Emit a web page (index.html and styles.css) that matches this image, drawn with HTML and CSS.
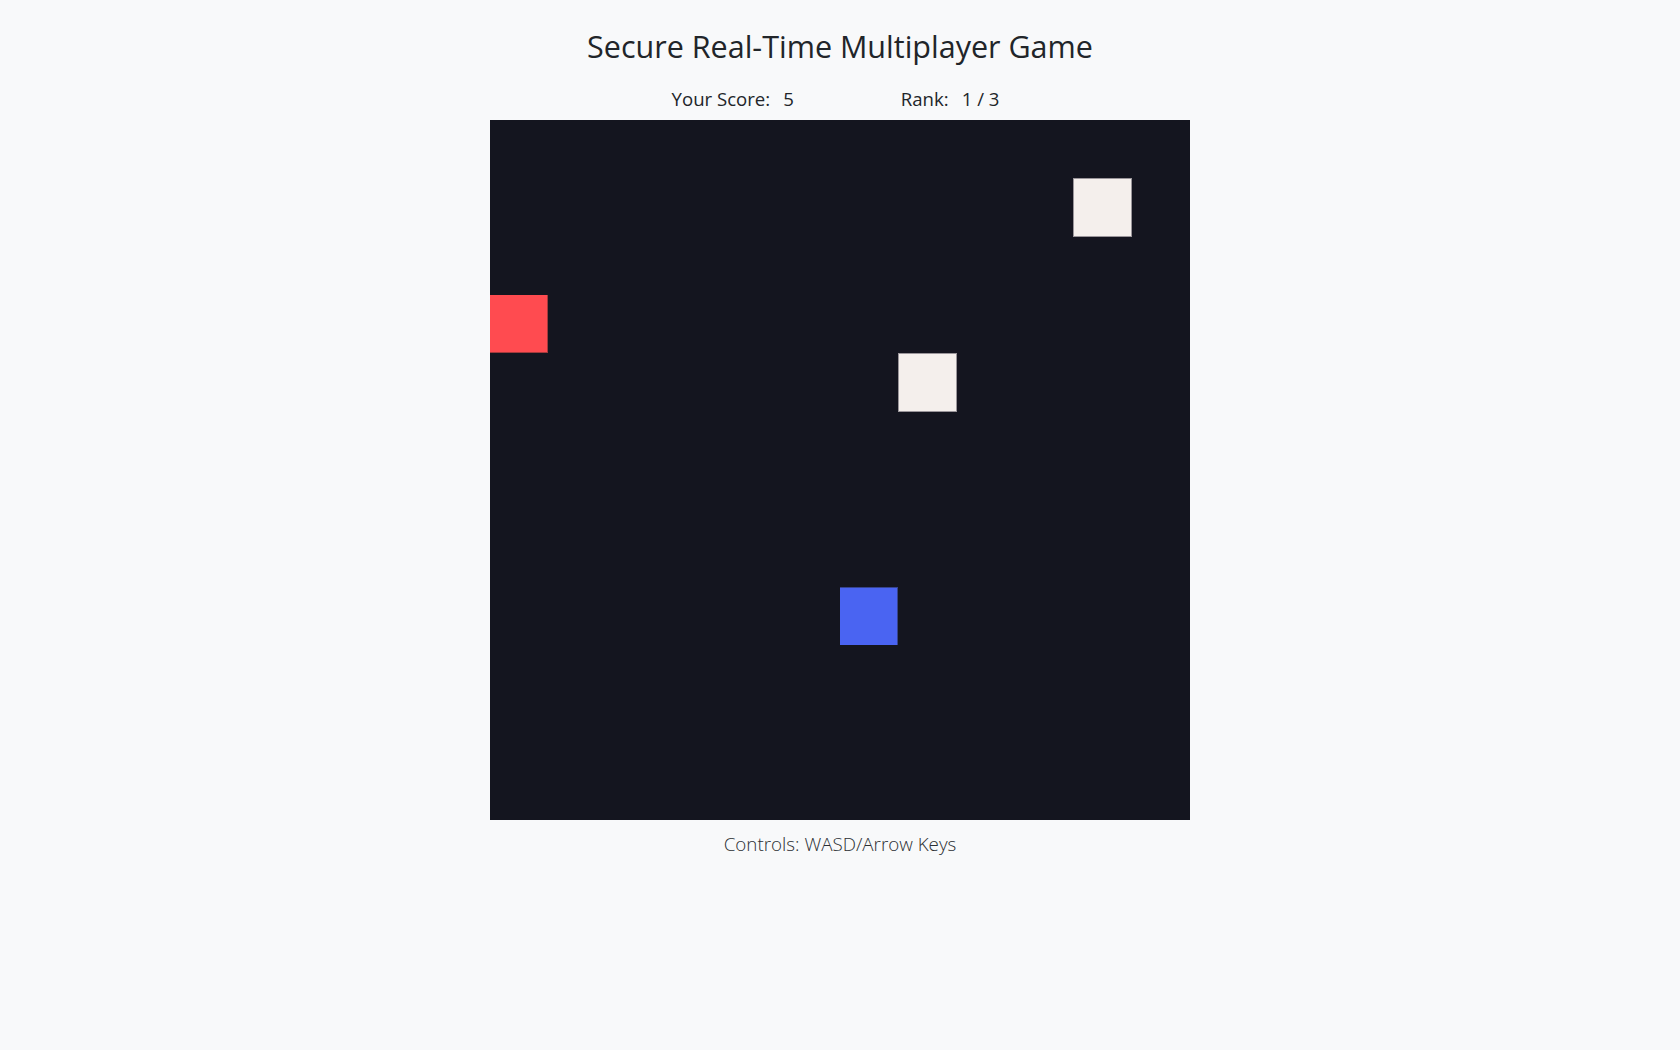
FILE: index.html
```html
<!DOCTYPE html>
<html lang="en">
<head>
<meta charset="utf-8">
<title>Secure Real-Time Multiplayer Game</title>
<link rel="stylesheet" href="styles.css">
</head>
<body>
<main class="page">
  <h1 class="title">Secure Real-Time Multiplayer Game</h1>
  <div class="stats">
    <div class="stat"><span class="label">Your Score:</span><span class="value">5</span></div>
    <div class="stat"><span class="label">Rank:</span><span class="value">1 / 3</span></div>
  </div>
  <div class="board">
    <div class="tile tile-red" style="left:0px; top:175px"></div>
    <div class="tile tile-item" style="left:583.33px; top:58.33px"></div>
    <div class="tile tile-item" style="left:408.33px; top:233.33px"></div>
    <div class="tile tile-blue" style="left:350px; top:466.67px"></div>
  </div>
  <p class="controls">Controls: WASD/Arrow Keys</p>
</main>
</body>
</html>
```
FILE: styles.css
```css
html, body {
  margin: 0;
  padding: 0;
  background: #f8f9fa;
}
body {
  font-family: "Open Sans", "Noto Sans", sans-serif;
  color: #212529;
}
.page {
  display: flex;
  flex-direction: column;
  align-items: center;
}
.title {
  margin: 26px 0 0;
  font-size: 30.5px;
  font-weight: 400;
  line-height: 40px;
}
.stats {
  display: flex;
  gap: 107px;
  margin-top: 21px;
  padding-right: 9px;
  font-size: 18.6px;
  line-height: 24px;
}
.stat {
  display: flex;
  gap: 13px;
}
.board {
  position: relative;
  width: 700px;
  height: 700px;
  margin-top: 9px;
  background: #14151f;
}
.tile {
  position: absolute;
  width: 58.33px;
  height: 58.33px;
  box-sizing: border-box;
}
.tile-red {
  background: #ff4b50;
  border-right: 1px solid #a33a3c;
  border-bottom: 1px solid #a33a3c;
}
.tile-blue {
  background: #4a64f2;
  border-top: 1px solid #37448f;
  border-right: 1px solid #37448f;
}
.tile-item {
  background: #f4efec;
  border: 1px solid #9a959a;
}
.controls {
  margin: 12px 0 0;
  font-size: 18.8px;
  font-weight: 300;
  color: #2b2f33;
  line-height: 24px;
}
```
